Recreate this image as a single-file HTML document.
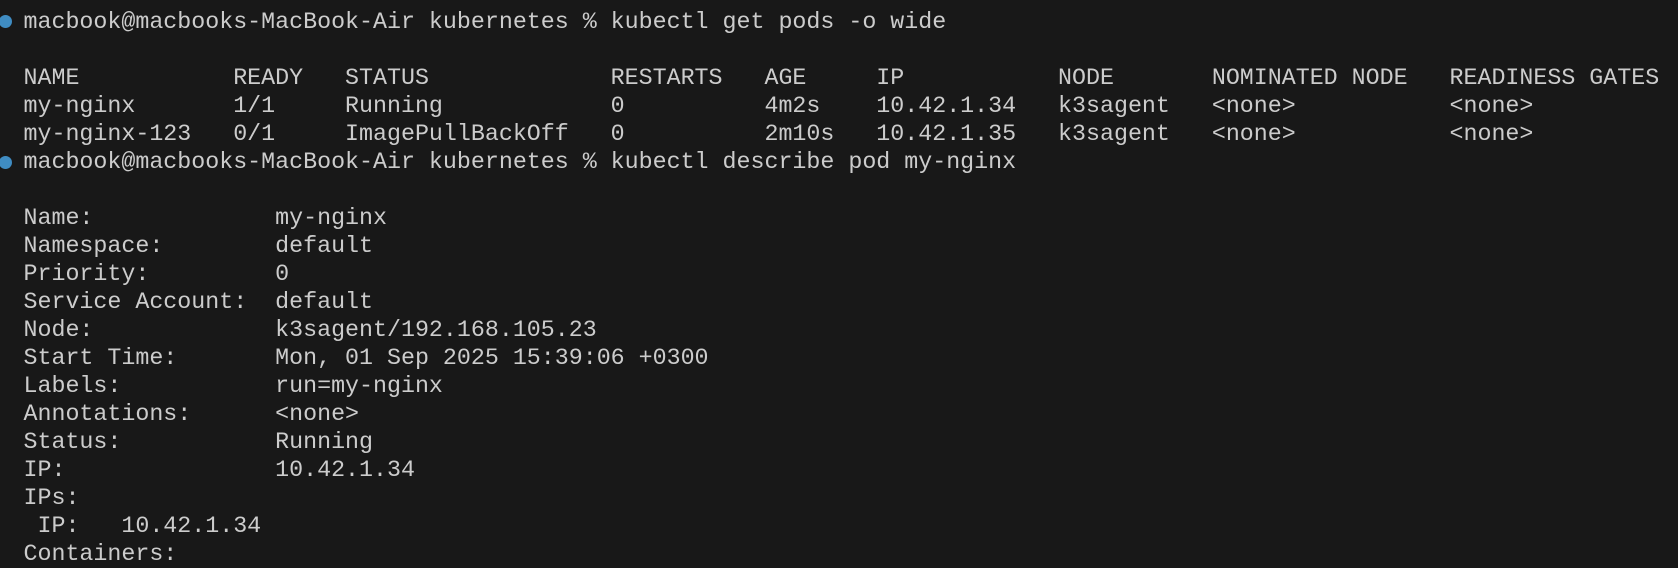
<!DOCTYPE html>
<html><head><style>
html,body{margin:0;padding:0;background:#181818;width:1678px;height:556px;overflow:hidden}
pre{position:absolute;left:23.5px;top:7.5px;margin:0;font-family:"Liberation Mono",monospace;font-size:23.3px;line-height:28.04px;color:#cccccc;white-space:pre}
.dot{position:absolute;left:-1px;width:13px;height:13px;border-radius:50%;background:#3f8cc2}
</style></head><body>
<div class="dot" style="top:15px"></div>
<div class="dot" style="top:156px"></div>
<pre>macbook@macbooks-MacBook-Air kubernetes % kubectl get pods -o wide

NAME           READY   STATUS             RESTARTS   AGE     IP           NODE       NOMINATED NODE   READINESS GATES
my-nginx       1/1     Running            0          4m2s    10.42.1.34   k3sagent   &lt;none&gt;           &lt;none&gt;
my-nginx-123   0/1     ImagePullBackOff   0          2m10s   10.42.1.35   k3sagent   &lt;none&gt;           &lt;none&gt;
macbook@macbooks-MacBook-Air kubernetes % kubectl describe pod my-nginx

Name:             my-nginx
Namespace:        default
Priority:         0
Service Account:  default
Node:             k3sagent/192.168.105.23
Start Time:       Mon, 01 Sep 2025 15:39:06 +0300
Labels:           run=my-nginx
Annotations:      &lt;none&gt;
Status:           Running
IP:               10.42.1.34
IPs:
 IP:   10.42.1.34
Containers:</pre>
</body></html>
